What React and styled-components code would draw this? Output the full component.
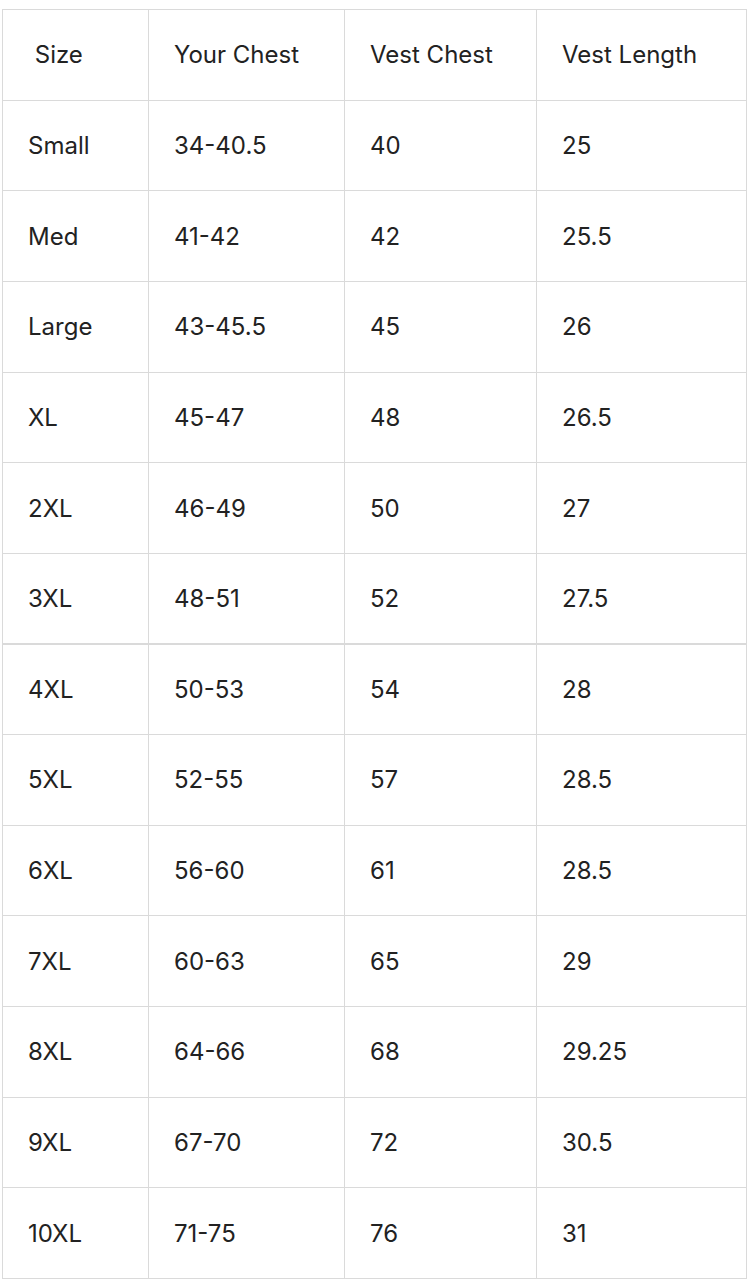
import React from "react";
import styled, { createGlobalStyle } from "styled-components";

const rows = [
  ["Small", "34-40.5", "40", "25"],
  ["Med", "41-42", "42", "25.5"],
  ["Large", "43-45.5", "45", "26"],
  ["XL", "45-47", "48", "26.5"],
  ["2XL", "46-49", "50", "27"],
  ["3XL", "48-51", "52", "27.5"],
  ["4XL", "50-53", "54", "28"],
  ["5XL", "52-55", "57", "28.5"],
  ["6XL", "56-60", "61", "28.5"],
  ["7XL", "60-63", "65", "29"],
  ["8XL", "64-66", "68", "29.25"],
  ["9XL", "67-70", "72", "30.5"],
  ["10XL", "71-75", "76", "31"],
];

const GlobalStyle = createGlobalStyle`
  body {
    margin: 0;
    background: #ffffff;
    font-family: "Inter", "Liberation Sans", sans-serif;
  }
`;

const Page = styled.div`
  padding: 9px 0 0 2px;
`;

const Table = styled.table`
  border-collapse: collapse;
  table-layout: fixed;
  width: 744px;
  color: #222222;
  font-size: 24px;
`;

const Row = styled.tr`
  height: 90.65px;
  border-top: ${(p) => (p.$thick ? "2px" : "1px")} solid #dadada;
`;

const Cell = styled.td`
  border: 1px solid #dadada;
  padding: 0 0 0 25px;
  vertical-align: middle;
  white-space: nowrap;
  font-weight: 400;
  text-align: left;
`;

const HeadCell = styled(Cell).attrs({ as: "th" })``;

const App = () => {
  return (
    <>
      <GlobalStyle />
      <Page>
        <Table>
          <colgroup>
            <col style={{ width: 146 }} />
            <col style={{ width: 196 }} />
            <col style={{ width: 192 }} />
            <col style={{ width: 210 }} />
          </colgroup>
          <thead>
            <Row>
              <HeadCell>{"\u00a0Size"}</HeadCell>
              <HeadCell>Your Chest</HeadCell>
              <HeadCell>Vest Chest</HeadCell>
              <HeadCell>Vest Length</HeadCell>
            </Row>
          </thead>
          <tbody>
            {rows.map((r, i) => (
              <Row key={r[0]} $thick={i === 6}>
                {r.map((v, j) => (
                  <Cell key={j}>{v}</Cell>
                ))}
              </Row>
            ))}
          </tbody>
        </Table>
      </Page>
    </>
  );
};

export default App;
